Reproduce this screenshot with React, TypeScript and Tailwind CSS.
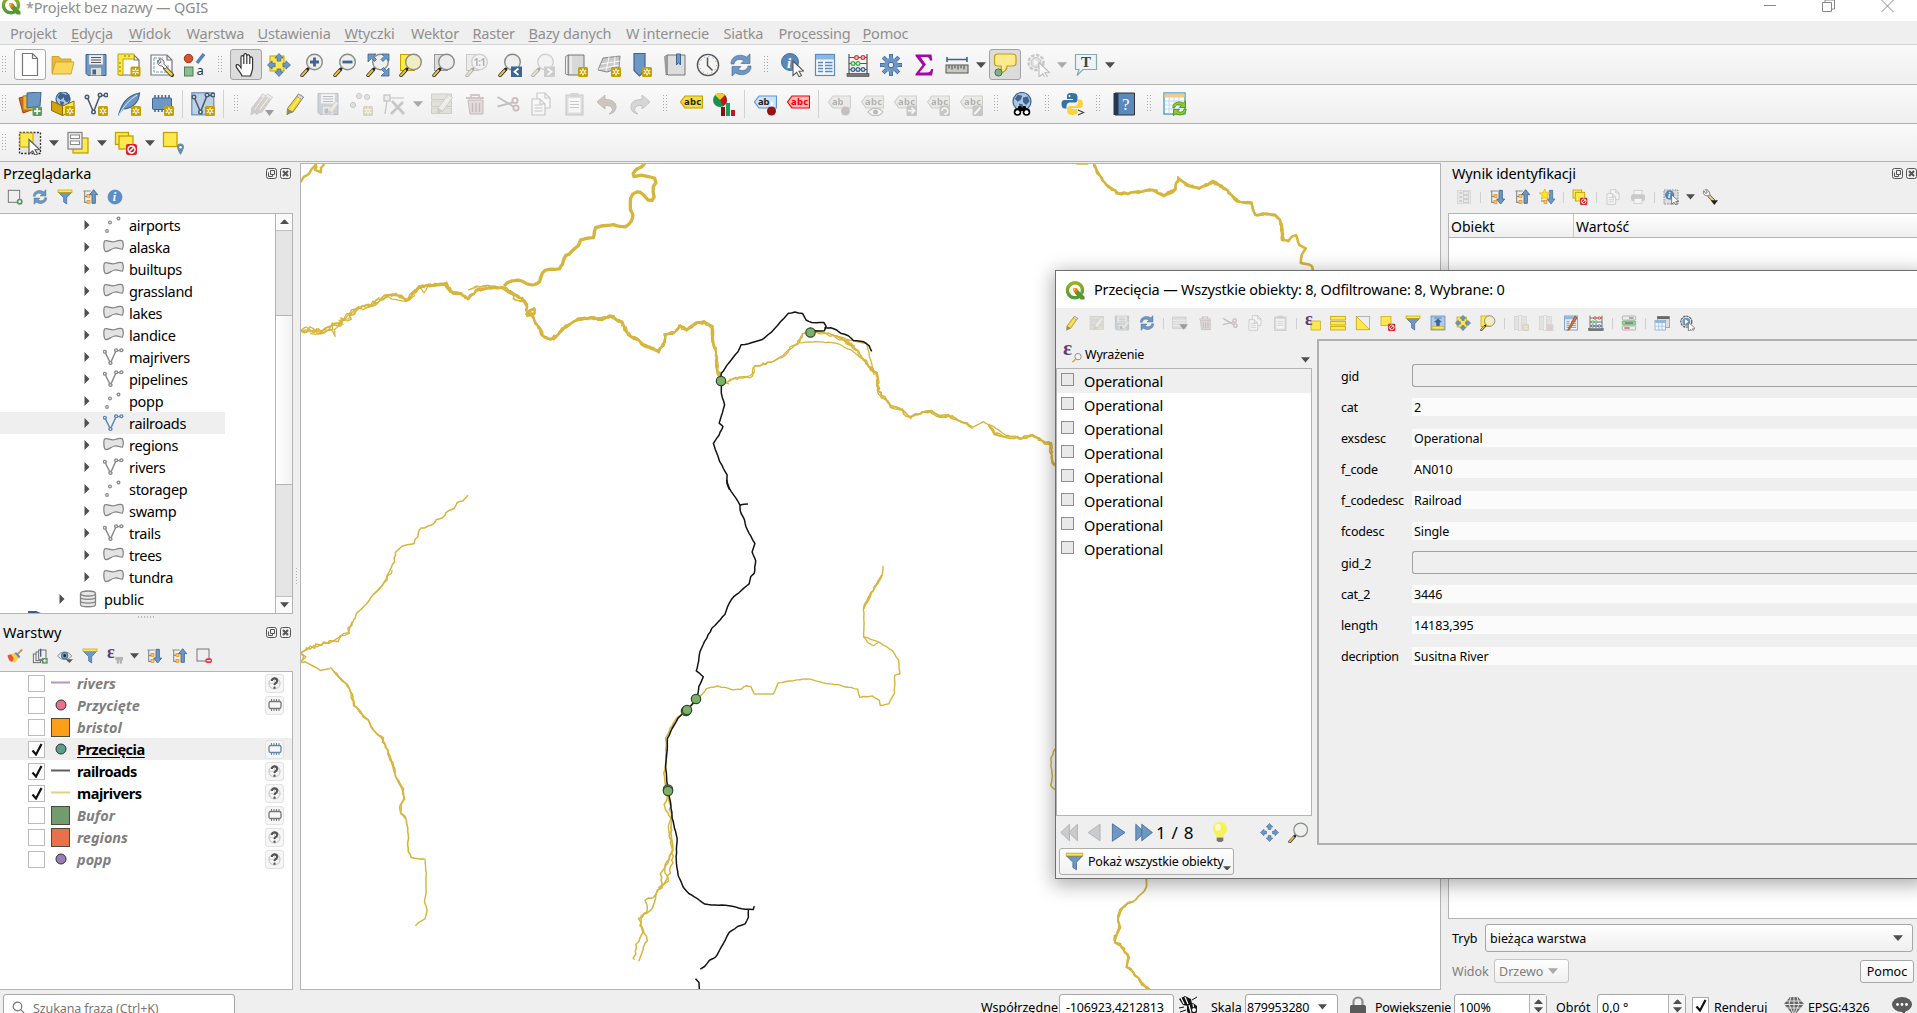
import React from "react";

type Pt = [number, number];
type Kids = { children?: React.ReactNode };

/* ---------- shared icon parts (24 x 24 grid) ---------- */

const B = "#6d97c4";
const BD = "#3f6490";
const Y = "#fce94f";
const YD = "#c4a000";

function Svg({ s = 24, dim = false, children }: Kids & { s?: number; dim?: boolean }) {
  return (
    <svg width={s} height={s} viewBox="0 0 24 24" fill="none" className={dim ? "shrink-0 opacity-35 grayscale-[60%]" : "shrink-0"}>
      {children}
    </svg>
  );
}

const Star = ({ x = 14, y = 14 }: { x?: number; y?: number }) => (
  <g transform={`translate(${x} ${y})`}>
    <rect width="10" height="10" rx="1.5" fill={YD} />
    <path d="M5 1.5v7M1.8 3.2l6.4 3.6M8.2 3.2l-6.4 3.6" stroke="#fff" strokeWidth="1.3" />
    <circle cx="5" cy="5" r="1.1" fill={YD} />
  </g>
);

const Glass = ({ fill = "#eef0ee" }: { fill?: string }) => (
  <g>
    <path d="M2 22.5l5.5-6" stroke="#333" strokeWidth="3.4" strokeLinecap="round" />
    <path d="M2 22.3l4.5-5" stroke="#f3c331" strokeWidth="2" strokeLinecap="round" />
    <path d="M7 16.7l2.2-2.3" stroke="#222" strokeWidth="2.2" />
    <circle cx="14.5" cy="9" r="7.8" fill={fill} stroke="#8a8c88" strokeWidth="1.4" />
  </g>
);

const Arrows = ({ c = B }: { c?: string }) => (
  <g fill={c} stroke={BD} strokeWidth="0.7">
    <path d="M12 0.5l4.2 4.6h-2.4v3h-3.6v-3H7.800z" />
    <path d="M12 23.500l4.200-4.600h-2.400v-3h-3.600v3H7.800z" />
    <path d="M0.500 12l4.600-4.200v2.400h3v3.600h-3v2.400z" />
    <path d="M23.500 12l-4.600-4.200v2.400h-3v3.600h3v2.400z" />
  </g>
);

const Pencil = ({ c = "#f0d83c" }: { c?: string }) => (
  <g>
    <path d="M6 21l-2 2 .5-6.500L15.500 2l5 3L10 20z" fill={c} stroke="#8a7a20" strokeWidth="0.9" />
    <path d="M15.500 2l5 3-1.700 2.500-5-3z" fill="#d8d8d8" stroke="#888" strokeWidth="0.7" />
    <path d="M4.500 16.500L4 23l6-3z" fill="#888a80" />
    <path d="M8 17.500l8.600-12" stroke="#fff7a8" strokeWidth="1" />
  </g>
);

const TagShape = ({ fill, stroke, color, text = "abc" }: { fill: string; stroke: string; color: string; text?: string }) => (
  <g>
    <path d="M6 4h17.500v12H6L1.500 10z" fill={fill} stroke={stroke} strokeWidth="1.2" />
    <text x="5" y="13" fontSize="9.500" fontWeight="700" fill={color} fontFamily="Noto Sans, sans-serif" textLength={text.length * 5.700}>
      {text}
    </text>
  </g>
);

const VShape = ({ c = "#4f6f90", w = 1.6 }: { c?: string; w?: number }) => (
  <g stroke={c} strokeWidth={w}>
    <path d="M3.500 6L9.500 20 16 3.500h5" />
    <circle cx="3" cy="5" r="1.700" fill="#fff" />
    <circle cx="9.500" cy="20" r="1.700" fill="#fff" />
    <circle cx="16" cy="3" r="1.700" fill="#fff" />
    <circle cx="22" cy="3" r="1.700" fill="#fff" />
  </g>
);

const Funnel = () => (
  <g>
    <path d="M2 5h20l-7.500 8v9.500l-4.500-3V13z" fill={B} stroke={BD} strokeWidth="1" />
    <rect x="1.500" y="1.500" width="21" height="3.500" fill={Y} stroke={YD} />
  </g>
);

const Cursor = ({ x = 11, y = 9 }: { x?: number; y?: number }) => (
  <path transform={`translate(${x} ${y})`} d="M1 0.500l10.500 10-4.500.300 2.500 4.200-2.500 1.200-2.300-4.400L1 15z" fill="#fff" stroke="#555" strokeWidth="1.100" />
);

const Epsilon = () => (
  <text x="0" y="14.500" fontSize="27" fontWeight="700" fill="#5e3f75" fontFamily="Liberation Serif, serif">ε</text>
);

const Treelines = () => (
  <g>
    <path d="M2 3h11M4 3v18M4 11h4M4 20h4" stroke="#8b8b8b" strokeWidth="1.700" />
    <rect x="7.500" y="8" width="4.500" height="4.500" fill="#f9c277" stroke="#e08a1a" />
    <rect x="7.500" y="17" width="4.500" height="4.500" fill="#f9c277" stroke="#e08a1a" />
  </g>
);

const Refresh = () => (
  <g fill={B} stroke={BD} strokeWidth="0.6">
    <path d="M2 11C1.500 4 10-.500 17.500 4L21 1v9.500h-9l3-3C10 5 5.500 7 5 11z" />
    <path d="M22 13c.500 7-8 11.500-15.500 7L3 23v-9.500h9l-3 3c5 2.500 9.500.500 10-3.500z" />
  </g>
);

const Page = ({ x = 4, y = 2, w = 14, h = 20 }: { x?: number; y?: number; w?: number; h?: number }) => (
  <path d={`M${x} ${y}h${w - 5}l5 5v${h - 5}h${-w}z M${x + w - 5} ${y}v5h5`} fill="#fff" stroke="#777" strokeWidth="1.2" />
);

const Disk = () => (
  <g>
    <path d="M2 1.500h20v21H4L2 20.500z" fill={B} stroke={BD} />
    <rect x="5" y="2" width="14" height="9.500" fill="#eee" stroke="#bbb" strokeWidth=".5" />
    <path d="M7 4.500h10M7 7h10M7 9.500h10" stroke="#555" strokeWidth="1" />
    <rect x="6.500" y="14.500" width="11" height="8" fill="#ddd" stroke="#888" strokeWidth=".6" />
    <rect x="8.500" y="16.500" width="3.500" height="5" fill={BD} />
  </g>
);

const Abacus = () => (
  <g>
    <path d="M3 1v20M21 1v20M3 4.500h18M3 10.500h18M3 16.500h18" stroke="#555" strokeWidth="1.200" />
    <rect x="1" y="20.500" width="22" height="3" fill="#777" stroke="#444" strokeWidth=".6" />
    <g fill="#f5c9c9" stroke="#d33" strokeWidth="1.200"><circle cx="10.500" cy="4.500" r="1.900" /><circle cx="17" cy="4.500" r="1.900" /></g>
    <g fill="#c9f0c9" stroke="#4a4" strokeWidth="1.200"><circle cx="7" cy="10.500" r="1.900" /><circle cx="12" cy="10.500" r="1.900" /></g>
    <g fill="#c9daf0" stroke={BD} strokeWidth="1.200"><circle cx="7" cy="16.500" r="1.900" /><circle cx="12" cy="16.500" r="1.900" /><circle cx="17" cy="16.500" r="1.900" /></g>
  </g>
);

const Trash = () => (
  <g>
    <path d="M3 6h18M8 6V3h8v3" stroke="#a66" strokeWidth="1.800" />
    <path d="M5 8h15v14H7z" fill="#d5a8a0" stroke="#8a4a44" />
    <path d="M9.500 11v9M13 11v9M16.500 11v9" stroke="#8a4a44" strokeWidth="1.300" />
  </g>
);

const Scissors = () => (
  <g stroke="#666" strokeWidth="1.900">
    <path d="M1.500 5l16 9.500M1.500 14.500l15-4" />
    <circle cx="20" cy="16" r="2.600" stroke="#b44" />
    <circle cx="19" cy="8.500" r="2.600" stroke="#b44" />
  </g>
);

const Copy = () => (
  <g>
    <Page x={8} y={1} w={13} h={15} />
    <Page x={3} y={7} w={13} h={16} />
    <path d="M5.500 13h8M5.500 16h8M5.500 19h8" stroke="#777" />
  </g>
);

const Paste = () => (
  <g>
    <rect x="4" y="3" width="17" height="20" fill="#b5b5a0" stroke="#777" />
    <rect x="6.500" y="6" width="12" height="14.500" fill="#fff" />
    <rect x="8.500" y="1" width="8" height="4" fill="#999" />
    <path d="M8 9.500h9M8 12.500h9M8 15.500h9" stroke="#777" />
  </g>
);

const Forbid = ({ x = 12, y = 13 }: { x?: number; y?: number }) => (
  <g transform={`translate(${x} ${y})`}>
    <rect width="11" height="11" rx="2" fill="#d8232a" />
    <circle cx="5.500" cy="5.500" r="3.500" stroke="#fff" strokeWidth="1.400" />
    <path d="M3.200 7.800l4.600-4.600" stroke="#fff" strokeWidth="1.400" />
  </g>
);

const TableGrid = () => (
  <g>
    <rect x="2.500" y="1.500" width="19" height="21" fill="#f3f8fd" stroke="#5d8bbd" strokeWidth="1.200" />
    <rect x="3" y="2" width="18" height="4.500" fill="#8db8e2" />
    <path d="M5 9.500h5M5 12.500h5M5 15.500h5M5 18.500h5M12 9.500h7.500M12 12.500h7.500M12 15.500h7.500M12 18.500h7.500" stroke="#5d8bbd" strokeWidth="1.300" />
  </g>
);

const Globe = ({ cx = 12, cy = 9.500, r = 8.500 }: { cx?: number; cy?: number; r?: number }) => (
  <g>
    <circle cx={cx} cy={cy} r={r} fill="#a9c6e6" stroke="#3d5f88" strokeWidth="1.200" />
    <path d={`M${cx - r * 0.800} ${cy - r * 0.300}l3-4 4.500 1-1.500 4-3 2zM${cx + 1} ${cy - 4}l5-1 1.500 5-3.500 3.500-3-3zM${cx - 3} ${cy + 2}l4 1-1 4-2.500-1z`} fill="#41648f" />
  </g>
);

const SmallBadge = ({ children }: Kids) => (
  <g>
    <rect x="13.500" y="13.500" width="10.500" height="10.500" rx="1.500" fill="#777" />
    {children}
  </g>
);

/* ---------- icon set ---------- */

const IC: Record<string, React.ReactNode> = {
  file: <Page x={4.500} y={0.500} w={15} h={22} />,
  open: (
    <g stroke="#c9a227" strokeWidth=".9">
      <path d="M1 20V3.500h7l2 2.500h10v4z" fill="#e9b93a" />
      <path d="M1 21l3.500-12H23l-3 12z" fill="#fbd65b" />
    </g>
  ),
  save: <Disk />,
  layout: (
    <g>
      <Page x={3} y={2} w={19} h={20} />
      <path d="M1 1h16v5H6v16H1z" fill={Y} stroke={YD} />
      <path d="M8 2v2M12 2v2M2 10h2M2 14h2M2 18h2" stroke="#8b7200" />
      <Star x={13.500} y={13.500} />
    </g>
  ),
  wrench: (
    <g>
      <Page x={1} y={2} w={21} h={20} />
      <path d="M4 5h9M4 5v14h14v-7" stroke={B} strokeDasharray="3 1" />
      <path d="M15 15l7 7" stroke="#333" strokeWidth="4" strokeLinecap="round" />
      <path d="M15 15l6.500 6.500" stroke="#f3d24d" strokeWidth="2.500" strokeLinecap="round" />
      <path d="M8 7a4 4 0 004 6l3 3 2-2-3-3a4 4 0 00-5-5l2 3-1.500 1.500z" fill="#eee" stroke="#666" strokeWidth=".9" />
    </g>
  ),
  style: (
    <g>
      <circle cx="5.500" cy="5.500" r="4.200" fill="#d9542b" stroke="#9c3412" />
      <path d="M14 10l7-9" stroke="#5984b5" strokeWidth="3.500" />
      <rect x="1.500" y="14" width="8.500" height="9" fill="#8dbb93" stroke="#4d7f55" />
      <text x="13.500" y="22" fontSize="13" fill="#333" fontFamily="Noto Sans, sans-serif">a</text>
    </g>
  ),
  hand: (
    <path
      d="M8 23C7 19.500 3 16 2.200 13.500 1.500 11.500 4 11 5.200 12.500L7 15V4.200c0-2.200 2.600-2.200 2.800 0V2.200c.2-2.200 2.900-2 3 0v1c.3-1.900 2.800-1.700 3 .3v1.500c.4-1.700 2.700-1.500 2.800.5V15c0 3-1.600 5-2 8zM9.800 4v7M12.800 3v8M15.800 4v7"
      fill="#fff" stroke="#333" strokeWidth="1.200"
    />
  ),
  panSel: (<g><rect x="3" y="3" width="14" height="15" fill={Y} stroke={YD} /><Arrows /></g>),
  zoomIn: (<g><Glass /><path d="M14.500 4.500v9M10 9h9" stroke={BD} strokeWidth="2.800" /></g>),
  zoomOut: (<g><Glass /><path d="M9.500 9h10" stroke={BD} strokeWidth="2.800" /></g>),
  zoomFull: (
    <g><Glass /><g fill={B} stroke={BD} strokeWidth=".8">
      <path d="M2 1h8L7.500 3.500l3 3-2 2-3-3L2 9zM23 1h-7l2 2.500-3 3 2 2 3-3L23 8zM23 23v-8l-2.500 2.500-3-3-2 2 3 3L15 23z" />
    </g></g>
  ),
  zoomSel: (<g><rect x="1.500" y="1.500" width="14" height="16" fill={Y} stroke={YD} /><Glass fill="#f1edc4" /></g>),
  zoomLayer: (<g><rect x="2.500" y="1.500" width="13" height="16" fill="#ddd" stroke="#999" /><Glass fill="#ececec" /></g>),
  zoomOne: (<g><rect x="1.500" y="1.500" width="12" height="16" fill="#ddd" stroke="#777" /><Glass /><text x="8.500" y="13" fontSize="10" fontWeight="700" fill="#333" fontFamily="Noto Sans, sans-serif" textLength="12.500">1:1</text></g>),
  zoomLast: (<g><Glass /><rect x="13" y="13.500" width="11" height="10.500" fill={BD} /><path d="M20.500 15.500l-4 3.300 4 3.200" stroke="#fff" strokeWidth="1.800" /></g>),
  zoomNext: (<g><Glass /><rect x="13" y="13.500" width="11" height="10.500" fill="#888" /><path d="M16.500 15.500l4 3.300-4 3.200" stroke="#fff" strokeWidth="1.800" /></g>),
  newMap: (<g><path d="M4 2h16v20H4z" fill="#d8d8d8" stroke="#777" /><path d="M1.500 3.500L4 2v20l-2.500-1z" fill="#f2f2f2" stroke="#777" strokeWidth=".8" /><path d="M7 3v18" stroke="#f2f2f2" strokeWidth="1.500" /><Star /></g>),
  map3d: (<g><path d="M1 17L6 5l17-2-1 12-12 4z" fill="#c9c9c9" stroke="#888" /><path d="M4 11l19-3M12 4l-3 14M18 3.500L17 16M1.500 16L22 12" stroke="#fff" strokeWidth=".9" /><Star /></g>),
  bookmark: (<g><path d="M4 0.500h11v17L9.500 23 4 17.500z" fill={B} stroke={BD} strokeWidth="1.200" /><Star x={12} /></g>),
  bookmarks: (<g><path d="M4 2h18v20H5l-1-1z" fill="#ddd" stroke="#777" /><path d="M1.500 3.500L4 2v20H3z" fill="#aaa" stroke="#777" strokeWidth=".6" /><path d="M13.500 1h4v11l-2-2.500-2 2.500z" fill={B} stroke={BD} /></g>),
  clock: (<g><circle cx="12" cy="12" r="10.600" fill="#f4f5f3" stroke="#555" strokeWidth="1.400" /><circle cx="12" cy="12" r="8.500" stroke="#6d97c4" strokeWidth="1" strokeDasharray="1 3.450" /><path d="M11.500 4.500v8l5 5" stroke="#555" strokeWidth="1.500" /></g>),
  refresh: <Refresh />,
  identify: (<g><circle cx="10" cy="9" r="8.500" fill="#5c87b8" stroke="#44709f" /><text x="7" y="15" fontSize="15" fontWeight="700" fontStyle="italic" fill="#fff" fontFamily="Liberation Serif, serif">i</text><Cursor x={12} y={7.500} /></g>),
  table: <TableGrid />,
  abacus: <Abacus />,
  gear: (<g><g stroke={BD} strokeWidth="4"><path d="M12 1v22M1 12h22M4.200 4.200l15.600 15.600M19.800 4.200L4.200 19.800" /></g><g stroke={B} strokeWidth="2.600"><path d="M12 1.500v21M1.500 12h21M4.500 4.500l15 15M19.500 4.500l-15 15" /></g><circle cx="12" cy="12" r="7" fill={B} /><circle cx="12" cy="12" r="2.800" fill="#e9f0f8" stroke={BD} /></g>),
  sigma: <path d="M3.500 1.500h16l.8 6H18c-.5-2.500-1.500-3.500-4-3.500H8.500l5.500 7.500-6.500 8H15c2.500 0 3.500-1 4.300-3.500h2L20 22.500H3.500v-1.500l7-9-7-9z" fill="#a20aa8" />,
  ruler: (<g><path d="M2 6.500h20M2 4v5M22 4v5" stroke="#3f6490" strokeWidth="1.600" /><rect x="1" y="12" width="22" height="8" fill="#c9c9c4" stroke="#555" /><path d="M4 12.500v3M7 12.500v4M10 12.500v3M13 12.500v4M16 12.500v3M19 12.500v4" stroke="#444" /></g>),
  tip: (<g><path d="M5 1h14.500c2.200 0 3.500 1.200 3.500 3v6c0 2-1.300 3-3.500 3H14c0 3-2 6-6.500 7 1-2 1.500-4 .5-7H5c-2.200 0-3.500-1-3.500-3V4C1.500 2.200 2.800 1 5 1z" fill="#fbeb8e" stroke={YD} strokeWidth="1.200" /><circle cx="5.500" cy="19.500" r="3.600" fill="#80b284" stroke="#43744a" /></g>),
  action: (<g><circle cx="10" cy="9.500" r="7.500" stroke="#777" strokeWidth="2.500" strokeDasharray="3.500 1.500" /><circle cx="10" cy="9.500" r="5" fill="#bbb" stroke="#666" /><path d="M8 6.500l5 3-5 3z" fill="#fff" /><Cursor x={12} y={9} /></g>),
  textNote: (<g><path d="M1.500 1.500h21v15H9L3 22.500 5 16.500H1.500z" fill="#eef4f6" stroke="#8aa" strokeWidth="1.200" /><text x="7" y="14" fontSize="15" fontWeight="700" fill="#444" fontFamily="Liberation Serif, serif">T</text></g>),

  dataSource: (<g><path d="M1 6l11-3 4 14-11 4z" fill="#d9622d" stroke="#a33f12" /><path d="M5 4l12-1 1 15H5z" fill="#eab835" stroke="#a98312" /><path d="M9 1l14-1-1 14-13 2z" fill={B} stroke={BD} /><rect x="14.500" y="14.500" width="9.500" height="9.500" rx="1.500" fill="#5d9a63" /><path d="M19.200 16v6.500M16 19.200h6.500" stroke="#fff" strokeWidth="1.700" /></g>),
  geopackage: (<g><Globe cx={12} cy={7} r={7} /><path d="M0.500 9l11 5v9.500l-11-5z" fill="#d6a400" stroke="#8b6c00" /><path d="M11.500 14L23 9v9.500l-11.500 5z" fill={Y} stroke="#8b6c00" /><Star /></g>),
  shapefile: (<g><VShape c="#4c5d6d" /><Star /></g>),
  spatialite: (<g><path d="M1.500 23.500C4 14 8 4 22.500 1 22 9 17 16 7 17" fill={B} stroke={BD} strokeWidth="1.200" /><path d="M1.500 23.500C6 15 12 8 20 3" stroke="#dfe9f5" strokeWidth="1" /><Star /></g>),
  memory: (<g><path d="M5 3v17M8.500 3v17M12 3v17M15.500 3v17M19 3v17" stroke={BD} strokeWidth="1.500" /><rect x="2.500" y="6" width="19" height="11.500" rx="1" fill={B} stroke={BD} /><Star /></g>),
  virtual: (<g><rect x=".8" y=".8" width="22" height="22" fill="#bdd2ea" stroke="#6b8db3" strokeWidth="1.200" /><VShape c="#4c5d6d" /><Star /></g>),
  pencils: (<g><g transform="translate(-3 0)"><Pencil c="#a9897a" /></g><g transform="translate(2 0)"><Pencil c="#a9897a" /></g><path d="M15 18h9l-4.500 6z" fill="#000" /></g>),
  pencil: <Pencil />,
  saveEdits: (<g><Disk /><g transform="translate(10 8) scale(.62)"><Pencil /></g></g>),
  points: (<g><g fill="#bbb" stroke="#777"><circle cx="4" cy="13" r="2.600" /><circle cx="10" cy="4" r="2.600" /><circle cx="18" cy="5" r="2.600" /></g><Star /></g>),
  vertex: (<g><rect x="2" y="3" width="6" height="6" fill="#ddd" stroke="#666" strokeWidth="1.300" /><path d="M8 6h14M5 9L3 22" stroke="#666" strokeWidth="1.200" /><path d="M10 9l12 13M21 10L9 22" stroke="#777" strokeWidth="2.800" /></g>),
  multiEdit: (<g><rect x="1.500" y="2" width="20" height="5.500" fill="#c9c37e" stroke="#887" /><rect x="1.500" y="9" width="20" height="5.500" fill="#c9c37e" stroke="#887" /><rect x="1.500" y="16" width="20" height="5.500" fill="#c9c37e" stroke="#887" /><g transform="translate(4 1) scale(.9)"><Pencil c="#ddd" /></g></g>),
  trash: <Trash />,
  cut: <Scissors />,
  copy: <Copy />,
  paste: <Paste />,
  undo: <path d="M2 10l8-7v4.500c8 0 11 3 11 7.500 0 4-3 6.500-7 7 3-2 4-4 3-6-1-2-3-2.800-7-2.500V17z" fill="#9a6a4a" stroke="#6d4e36" />,
  redo: <path d="M22 10l-8-7v4.500C6 7.500 3 10.500 3 15c0 4 3 6.500 7 7-3-2-4-4-3-6 1-2 3-2.800 7-2.500V17z" fill="#9aa09a" stroke="#667" />,
  abcYellow: <TagShape fill="#f5dd3a" stroke={YD} color="#222" />,
  abcRed: <TagShape fill="#ffb9b9" stroke="#f00000" color="#f00000" />,
  abcPin: (<g><TagShape fill="#cfe3fb" stroke="#5b93d8" color="#222" text="ab" /><path d="M18 18l1-8" stroke="#fff" strokeWidth="2" /><circle cx="18.500" cy="19" r="4.500" fill="#96131a" /></g>),
  diagram: (<g><circle cx="8" cy="8" r="7" fill="#16924f" /><path d="M8 8V1a7 7 0 017 7z" fill="#c4151c" /><path d="M8 8L3 3a7 7 0 0110 0z" fill="#f4cf1f" /><path d="M8 8h7a7 7 0 01-4 6z" fill="#c4151c" /><rect x="9" y="15" width="4" height="9" fill="#8c0f14" /><rect x="14" y="11" width="4" height="13" fill="#14a055" /><rect x="19" y="18" width="4" height="6" fill="#c4151c" /></g>),
  gPin: (<g><TagShape fill="#dcd8b8" stroke="#888" color="#333" text="ab" /><circle cx="18.500" cy="19" r="4.500" fill="#8b5e5e" /></g>),
  gEye: (<g><TagShape fill="#dcd8b8" stroke="#888" color="#333" /><path d="M8 20c4-5 11-5 15 0-4 5-11 5-15 0z" fill="#fff" stroke="#555" strokeWidth="1.200" /><circle cx="15.500" cy="20" r="2.500" fill="#555" /></g>),
  gMove: (<g><TagShape fill="#dcd8b8" stroke="#888" color="#333" /><SmallBadge><path d="M15 18.700h6M18.500 15.800l3.200 2.900-3.200 3" stroke="#fff" strokeWidth="1.600" /></SmallBadge></g>),
  gRotate: (<g><TagShape fill="#dcd8b8" stroke="#888" color="#333" /><SmallBadge><path d="M15.800 19a3 3 0 116 0c0 2-1.500 3.200-3.500 3.200" stroke="#fff" strokeWidth="1.500" /></SmallBadge></g>),
  gEdit: (<g><TagShape fill="#dcd8b8" stroke="#888" color="#333" /><SmallBadge><path d="M15.500 22l6-6.500" stroke="#fff" strokeWidth="2" /></SmallBadge></g>),
  metasearch: (<g><Globe r={9} /><path d="M6 22l2.500-8h2.500l1 2 1-2h2.500L18 22h-4v-3h-4v3z" fill="#000" /><circle cx="7.500" cy="20" r="3.800" fill="#000" /><circle cx="16.500" cy="20" r="3.800" fill="#000" /><circle cx="7.500" cy="20.200" r="2" fill="#fff" /><circle cx="16.500" cy="20.200" r="2" fill="#fff" /></g>),
  python: (
    <g>
      <path d="M10.500 1C6.500 1 6 2.500 6 4.500V7h6v1H3.500C1.500 8 .5 9.500.5 12s1 4.500 3 4.500H5.500V14c0-2 1.500-3.500 3.500-3.500h5c1.500 0 2.500-1 2.500-2.500V4.500C16.500 2 14.500 1 10.500 1z" fill="#3672a4" />
      <path d="M11 23c4 0 5.500-1.500 5.500-3.500V17h-6v-1h8.500c2 0 3-1.500 3-4s-1-4.500-3-4.500H17v3c0 2-1.500 3.500-3.500 3.500H9c-1.500 0-2.800 1-2.800 2.500v3C6.200 22 8 23 11 23z" fill="#fcd33f" />
      <circle cx="8.500" cy="4" r="1" fill="#fff" />
      <path d="M17 18l5.500 2.500L17 23" stroke="#444" strokeWidth="1.200" />
    </g>
  ),
  help: (<g><path d="M3 1h19.500v22H3z" fill="#5b88bd" stroke="#333" /><path d="M1.500 1h5v22h-5z" fill="#26384f" /><text x="10" y="17.500" fontSize="17" fill="#fff" fontFamily="Liberation Serif, serif">?</text></g>),
  reload: (<g><rect x="1" y="1" width="21" height="21" fill="#fff" stroke="#4a9dd0" strokeWidth="1.400" /><rect x="1.500" y="1.500" width="20" height="4" fill="#fbc977" /><path d="M6 2v19.500M11 2v19.500M16 2v19.500M2 9h19M2 13h19M2 17h19" stroke="#b9d9ee" /><g transform="translate(8.500 8.500) scale(.66)"><path d="M2 11C1.500 4 10-.500 17.500 4L21 1v9.500h-9l3-3C10 5 5.500 7 5 11zM22 13c.500 7-8 11.500-15.500 7L3 23v-9.500h9l-3 3c5 2.500 9.500.500 10-3.500z" fill="#8ccf2b" stroke="#4f8f0c" strokeWidth="1.400" /></g></g>),

  select: (<g><rect x="1.500" y="1.500" width="21" height="21" fill="#e4e4e4" stroke="#333" strokeWidth="1.300" strokeDasharray="2 1.500" /><rect x="2" y="2" width="13" height="14" fill={Y} stroke={YD} /><Cursor x={10} y={8} /></g>),
  selectForm: (<g><rect x="7" y="7" width="15" height="15" fill={Y} stroke={YD} strokeWidth="1.300" /><rect x="2" y="1.500" width="14" height="16.500" fill="#eee" stroke="#888" strokeWidth="1.300" /><rect x="4.500" y="4" width="9" height="3.500" fill="#fff" stroke="#888" /><rect x="4.500" y="10" width="9" height="3.500" fill="#fff" stroke="#888" /></g>),
  deselect: (<g><rect x="1.500" y="1.500" width="13" height="12" fill={Y} stroke={YD} strokeWidth="1.300" /><rect x="5" y="5" width="14" height="13" fill={Y} stroke={YD} strokeWidth="1.300" /><Forbid /></g>),
  selectLoc: (<g><rect x="1.500" y="1.500" width="13.500" height="14" fill={Y} stroke={YD} strokeWidth="1.300" /><path d="M18.500 12.500a3.500 3.500 0 013.500 3.500c0 2.500-3.500 8-3.500 8s-3.500-5.500-3.500-8a3.500 3.500 0 013.500-3.500z" fill="#6b8ca5" /><circle cx="18.500" cy="16.300" r="1.200" fill="#fff" /></g>),

  addLayer: (<g><rect x="2" y="2" width="17" height="18" stroke="#777" strokeWidth="1.500" /><circle cx="19" cy="19" r="4.500" fill="#5a9460" /><circle cx="19" cy="19" r="2" fill="#e5f2e6" /></g>),
  filter: <Funnel />,
  collapse: (<g><Treelines /><path d="M17.500 1l6 7.500h-3.500v13h-5v-13h-3.500z" fill={B} stroke={BD} strokeWidth="1.300" /></g>),
  expand: (<g><Treelines /><path d="M17.500 22.500l6-7.500h-3.500V2h-5v13h-3.500z" fill={B} stroke={BD} strokeWidth="1.300" /></g>),
  expandNew: (<g><path d="M3 18h5" stroke="#8b8b8b" strokeWidth="1.700" /><rect x="7.500" y="17" width="4.500" height="4.500" fill="#f9c277" stroke="#e08a1a" /><path d="M18 22.500l6-7.500h-3.500V2h-5v13h-3.500z" fill={B} stroke={BD} /><path d="M8.500 0l2.200 5.500 5.800.500-4.500 3.800 1.500 5.700L8.500 12.400 3.500 15.500 5 9.800.500 6l5.800-.500z" fill="#ffe71a" stroke="#e3a800" /></g>),
  info: (<g><circle cx="12" cy="12" r="10.500" fill="#5c8fca" stroke="#4577b3" /><text x="8.800" y="18.500" fontSize="18" fontWeight="700" fontStyle="italic" fill="#fff" fontFamily="Liberation Serif, serif">i</text></g>),
  brush: (<g><path d="M14 11l8-8" stroke="#d09a45" strokeWidth="3" strokeLinecap="round" /><path d="M1 11l12-4 6 6-7 9-7-2z" fill="#f4cf45" /><path d="M1 11l5-1.500 4 5.500-2 5.500-3-.5c-2-2-4-5-4-9z" fill="#e4563c" /><path d="M11 7.500l3-1 6 6-2 3z" fill="#5c8fca" /></g>),
  group: (<g stroke="#666" strokeWidth="1.400"><rect x="2" y="9" width="11" height="13" fill="#eee" /><rect x="6" y="6" width="11" height="13" fill="#eee" /><rect x="10" y="3" width="11" height="14" fill="#eee" /><path d="M13 1v12" stroke={BD} strokeWidth="2" /><rect x="15" y="15" width="8.500" height="8.500" fill="#5a9460" stroke="none" /><path d="M19.200 16.500v5.500M16.500 19.200H22" stroke="#fff" strokeWidth="1.500" /></g>),
  eye: (<g><path d="M1 12C6 4 17 4 22 12c-5 7-16 7-21 0z" fill="#e6eaee" stroke="#888" strokeWidth="1.400" /><circle cx="11.500" cy="11.500" r="5" fill="#6d97c4" stroke="#456" /><circle cx="11.500" cy="11.500" r="2" fill="#222" /><path d="M13 17h11l-5.500 5.500z" fill="#555" /></g>),
  epsilon: (<g><Epsilon /><path d="M13 14h11v3.500h-2V23h-2.500v-5h-2v5H15v-5.500h-2z" fill="#b5b5b5" stroke="#999" strokeWidth=".6" /></g>),
  epsilonFind: (<g><Epsilon /><path d="M12 23l4-4" stroke="#d8b23a" strokeWidth="2.200" /><circle cx="19" cy="16" r="4" fill="#f6f6f6" stroke="#888" strokeWidth="1.200" /></g>),
  removeLayer: (<g><rect x="1.500" y="1.500" width="18" height="18" stroke="#777" strokeWidth="1.500" /><rect x="14" y="15.500" width="10" height="7" rx="3" fill="#e8303a" /><path d="M16 19h6" stroke="#fff" strokeWidth="1.800" /></g>),

  form: (<g><rect x="2" y="2" width="20" height="20" fill="#ddd" stroke="#999" /><path d="M5 6h4M5 12h4M5 18h4" stroke="#777" strokeWidth="2" /><rect x="11" y="4" width="8" height="4" stroke="#777" /><rect x="11" y="10" width="8" height="4" stroke="#777" /><rect x="11" y="16" width="8" height="4" stroke="#777" /></g>),
  printer: (<g><rect x="6" y="2" width="12" height="8" fill="#fff" stroke="#777" /><rect x="1.500" y="8" width="21" height="10" rx="3" fill="#888" /><rect x="6" y="14" width="12" height="8" fill="#fff" stroke="#777" /></g>),
  identSel: (<g><rect x="1.500" y="1.500" width="21" height="21" fill="#ddd" stroke="#666" strokeDasharray="2.500 1.500" /><circle cx="10" cy="9" r="7" fill="#5c87b8" /><text x="7.500" y="14" fontSize="13" fontWeight="700" fontStyle="italic" fill="#fff" fontFamily="Liberation Serif, serif">i</text><Cursor x={12} y={8} /></g>),
  spanner: (<g><path d="M10 10l8 8" stroke="#555" strokeWidth="5" /><path d="M10 10l8 8" stroke="#e8d27a" strokeWidth="3" /><path d="M2.500 2.500C1 6 3 10 7 10l2.500.5L12 8l-1-3C10 2 7.500.500 5 1l3 3.500L6 7z" fill="#f7f7f7" stroke="#666" strokeWidth="1.300" /><path d="M13 17h11l-5.500 7z" fill="#222" /></g>),

  selExpr: (<g><rect x="9" y="9" width="14" height="13.500" fill={Y} stroke={YD} /><Epsilon /></g>),
  selAll: (<g fill={Y} stroke={YD} strokeWidth="1.200"><rect x="1" y="2" width="22" height="5.500" /><rect x="1" y="9.500" width="22" height="5.500" /><rect x="1" y="17" width="22" height="5.500" /></g>),
  invert: (<g><rect x="2" y="2" width="20" height="20" fill="#eee" stroke="#999" /><path d="M2 2v20h20z" fill={Y} stroke={YD} /></g>),
  desel: (<g><rect x="1.500" y="2" width="15" height="14" fill={Y} stroke={YD} /><Forbid /></g>),
  moveTop: (<g><rect x="1.500" y="1.500" width="21" height="21" fill="#a9cbee" stroke={BD} strokeWidth=".8" /><rect x="3" y="17" width="18" height="4" fill={Y} stroke={YD} strokeWidth=".7" /><path d="M6 4.500h12M12 5.500l5 5h-3V16h-4v-5.500H7z" fill={BD} stroke={BD} /></g>),
  newField: (<g><rect x="2" y="2" width="18" height="20" fill="#ccc" stroke="#999" /><rect x="8" y="1" width="5" height="22" fill="#eaeab8" stroke="#999" /><Star /></g>),
  delField: (<g><rect x="2" y="2" width="18" height="20" fill="#ccc" stroke="#999" /><rect x="8" y="1" width="5" height="22" fill="#eee" stroke="#999" /><rect x="13" y="14" width="10" height="10" fill="#d88" /></g>),
  tableEdit: (<g><TableGrid /><path d="M8 20l-1 3 3-1.500L21 4l-3-2.500z" fill="#e0763a" stroke="#8d3f12" /></g>),
  conditional: (<g><rect x="2" y="1.500" width="20" height="6" rx="1" fill="#eee" stroke="#999" /><rect x="2" y="9" width="20" height="6" rx="1" fill="#9ad29b" stroke="#6a6" /><rect x="2" y="16.500" width="20" height="6" rx="1" fill="#eee" stroke="#999" /><path d="M12 4.500h7M6 12h12" stroke="#444" strokeWidth="1.200" /><path d="M5 19.500h8" stroke="#d22" strokeWidth="1.600" /></g>),
  dock: (<g><rect x="5" y="2" width="18" height="17" fill="#ddd" stroke="#888" /><rect x="5" y="2" width="18" height="4" fill="#666" /><rect x="1.500" y="8" width="16" height="14.500" fill="#eef5fc" stroke="#7a9cc0" /><rect x="2" y="8.500" width="15" height="3.500" fill="#8db8e2" /><path d="M7 12v10M12 12v10M2 17h15" stroke="#9bbbd8" /></g>),
  actions: (<g><circle cx="11" cy="10" r="8.200" stroke="#666" strokeWidth="2" strokeDasharray="3.500 1.200" /><circle cx="11" cy="10" r="6" fill="#6d97c4" /><path d="M9 6.500l5.500 3.500L9 13.500z" fill="#fff" /><Cursor x={13} y={10} /></g>),
  tableDrop: (<g><rect x="1" y="3" width="20" height="17" fill="#bbb" stroke="#777" /><path d="M1 8h20M1 12h20M1 16h20" stroke="#fff" /><path d="M11 14h13l-6.500 8z" fill="#000" /></g>),

  first: (<g fill="#c9cccf" stroke="#aaa"><path d="M12 1.500v21L1 12z" /><path d="M22 1.500v21L11 12z" /></g>),
  prev: <path d="M19 1.500v21L4 12z" fill="#c9cccf" stroke="#aaa" />,
  next: <path d="M3 1v22L19 12z" fill={B} stroke={BD} />,
  last: (<g fill={B} stroke={BD}><path d="M1 1.500v21L12 12z" /><path d="M8.500 1.500v21L22 12z" /></g>),
  bulb: (<g><path d="M12 0C6.500 0 3.500 3.500 3.500 8c0 4 3.500 6 4.500 10h8c1-4 4.500-6 4.500-10 0-4.500-3-8-8.500-8z" fill="#f6f25a" /><ellipse cx="9.500" cy="6.500" rx="3.500" ry="4" fill="#fdfcc8" /><path d="M8 18.500h8v4l-2 1.500h-4l-2-1.500z" fill="#777" /></g>),
  move: <Arrows />,
  zoom: <Glass />,
};

function Icon({ n, s = 24, dim = false }: { n: string; s?: number; dim?: boolean }) {
  return <Svg s={s} dim={dim}>{IC[n]}</Svg>;
}

const Tri = ({ dim = false, s = 10 }: { dim?: boolean; s?: number }) => (
  <svg width={s} height={s * 0.6} viewBox="0 0 10 6" className="shrink-0">
    <path d="M0 0.300h10L5 6z" fill={dim ? "#a9a9a9" : "#4e4e4e"} />
  </svg>
);

/* ---------- toolbars ---------- */

// "|" grip, "/" separator, "v" drop-down, "*" pressed, "+" hovered, "-" disabled prefix
function Tool({ t }: { t: string }) {
  if (t === "|")
    return (
      <span className="flex w-[18px] shrink-0 justify-center gap-[2px]">
        <i className="h-[18px] w-px bg-[repeating-linear-gradient(#a8a8a8_0_1px,transparent_1px_3px)]" />
        <i className="h-[18px] w-px bg-[repeating-linear-gradient(#a8a8a8_0_1px,transparent_1px_3px)]" />
      </span>
    );
  if (t === "/") return <span className="flex w-2 shrink-0 justify-center"><i className="h-7 w-px bg-[#d2d2d2]" /></span>;
  if (t === "v" || t === "-v") return <span className="flex w-[15px] shrink-0 justify-center"><Tri dim={t === "-v"} /></span>;
  const p = t[0];
  const name = "*+-".includes(p) ? t.slice(1) : t;
  const box = p === "*" ? "border border-[#a3a3a3] bg-[#dcdcdc] rounded-[3px]" : p === "+" ? "border border-[#a9a9a9] bg-[#fdfdfd] rounded-[3px]" : "";
  return (
    <span className="flex w-[33px] shrink-0 justify-center">
      <span className={`flex h-[31px] w-8 items-center justify-center ${box}`}>
        <Icon n={name} dim={p === "-"} />
      </span>
    </span>
  );
}

function Bar({ items, h }: { items: string; h: string }) {
  return (
    <div className={`flex ${h} shrink-0 items-center border-b border-[#b2b2b2] bg-linear-to-b from-[#fafafa] to-[#efefef]`}>
      <div className="-ml-[5px] flex items-center">
        {items.split(" ").map((t, i) => <Tool key={i} t={t} />)}
      </div>
    </div>
  );
}

function MiniBar({ items, s = 16 }: { items: string; s?: number }) {
  return (
    <div className="flex items-center">
      {items.split(" ").map((t, i) =>
        t === "/" ? (
          <span key={i} className="flex w-2 justify-center"><i className="h-[11px] w-px bg-[#cfcfcf]" /></span>
        ) : t === "v" ? (
          <span key={i} className="flex w-[14px] justify-center"><Tri s={9} /></span>
        ) : (
          <span key={i} className="flex w-[25px] justify-center"><Icon n={t.replace("-", "")} s={s} dim={t[0] === "-"} /></span>
        )
      )}
    </div>
  );
}

const QLogo = ({ s }: { s: number }) => (
  <svg width={s} height={s} viewBox="0 0 24 24" fill="none" className="shrink-0">
    <defs><linearGradient id="qg" x1="0" y1="0" x2="0" y2="1"><stop offset="0" stopColor="#93b023" /><stop offset="1" stopColor="#4f9a3a" /></linearGradient></defs>
    <path d="M19 19.500A10 10 0 1122 12a10 10 0 01-1.300 5" stroke="url(#qg)" strokeWidth="4.500" transform="translate(1.200 1.200) scale(.9)" />
    <path d="M11.500 12.500l4-.5 8 8v3.500h-4.500l-7-7z" fill="#589632" />
    <path d="M9.500 9.500l5 .5 1.500 2-3.500 4-2-1.500z" fill="#ee7913" />
    <path d="M9.500 9.500l3.500 1-2 3z" fill="#f6c21c" />
  </svg>
);

const MENU: [string, string, string, string][] = [
  ["Pro", "j", "ekt", "w-[61px]"], ["", "E", "dycja", "w-[58px]"], ["", "W", "idok", "w-[57.5px]"], ["W", "a", "rstwa", "w-[71px]"],
  ["", "U", "stawienia", "w-[87px]"], ["", "W", "tyczki", "w-[66.5px]"], ["Wekt", "o", "r", "w-[61.5px]"], ["", "R", "aster", "w-[56px]"],
  ["", "B", "azy danych", "w-[97.5px]"], ["W ", "i", "nternecie", "w-[97.5px]"], ["Siatka", "", "", "w-[55px]"], ["Pro", "c", "essing", "w-[84px]"], ["", "P", "omoc", "w-[60px]"],
];

/* ---------- docks ---------- */

const DockButtons = () => (
  <span className="flex gap-[3px]">
    {[0, 1].map((k) => (
      <svg key={k} width="11" height="11" viewBox="0 0 11 11" fill="none" stroke="#555" className="shrink-0">
        <rect x=".5" y=".5" width="10" height="10" rx="2" />
        {k === 0 ? <path d="M4.500 2.500h4v4h-4zM2.500 4.500v4h4v-2" /> : <path d="M3 3l5 5M8 3L3 8" strokeWidth="2" />}
      </svg>
    ))}
  </span>
);

const Expander = () => (
  <svg width="6" height="10" viewBox="0 0 6 10" className="shrink-0"><path d="M.5 0L5.500 5l-5 5z" fill="#505050" /></svg>
);

function GeomIcon({ k, active }: { k: string; active?: boolean }) {
  if (k === "v") return <svg width="21" height="18" viewBox="1 0 24 24" preserveAspectRatio="none" fill="none"><VShape c={active ? "#5b87b0" : "#8a8a8a"} w={1.700} /></svg>;
  if (k === "p")
    return (
      <svg width="21" height="18" viewBox="0 0 21 18" fill="#fff" stroke="#8a8a8a" strokeWidth="1.200">
        <circle cx="4" cy="15" r="1.400" /><circle cx="7" cy="6.500" r="1.400" /><circle cx="15.500" cy="2.500" r="1.400" />
      </svg>
    );
  return (
    <svg width="21" height="18" viewBox="0 0 21 18" fill="#e3e3e3" stroke="#828282" strokeWidth="1.200">
      <path d="M1.500 3C4 1.500 8 5 12 3.500 15 2.500 18.500 2 19.500 3c.8 2 .8 6 0 8-1 1-4-1.500-7.500-1-4 .5-7 4.500-9.500 3.500C.5 12 .5 5 1.500 3z" />
    </svg>
  );
}

const TREE: [string, string][] = [
  ["airports", "p"], ["alaska", "g"], ["builtups", "g"], ["grassland", "g"], ["lakes", "g"], ["landice", "g"], ["majrivers", "v"], ["pipelines", "v"],
  ["popp", "p"], ["railroads", "v"], ["regions", "g"], ["rivers", "v"], ["storagep", "p"], ["swamp", "g"], ["trails", "v"], ["trees", "g"], ["tundra", "g"],
];

function Browser() {
  return (
    <section className="flex h-[452px] flex-col">
      <div className="flex h-[22px] items-end justify-between pr-[2px] pl-[3px]">
        <h2 className="text-[14.500px] leading-[21px] tracking-[-0.1px]">Przeglądarka</h2>
        <span className="pb-[5px]"><DockButtons /></span>
      </div>
      <div className="flex h-[29px] items-center pb-[3px] pl-[2px]"><MiniBar items="addLayer refresh filter collapse info" /></div>
      <div className="flex h-[401px] border border-l-0 border-[#b4b4b4] bg-white">
        <ul className="min-w-0 flex-1 overflow-hidden">
          {TREE.map(([name, k]) => (
            <li key={name} className={`flex h-[22px] items-center pl-[84px] ${name === "railroads" ? "w-[225px] bg-[#efefef]" : ""}`}>
              <Expander />
              <span className="ml-[13px] flex w-[26px]"><GeomIcon k={k} active={name === "railroads"} /></span>
              <span className="pt-px text-[14.500px] leading-[21px] tracking-[-0.3px]">{name}</span>
            </li>
          ))}
          <li className="flex h-[22px] items-center pl-[59px]">
            <Expander />
            <svg width="18" height="18" viewBox="0 0 18 18" fill="#e8e8e8" stroke="#848484" strokeWidth="1.300" className="ml-[14px]">
              <path d="M1.500 3.500v11c0 3 15 3 15 0v-11" /><path d="M1.500 7.300c0 2.700 15 2.700 15 0M1.500 11c0 2.700 15 2.700 15 0" /><ellipse cx="9" cy="3.500" rx="7.500" ry="2.500" />
            </svg>
            <span className="ml-[7px] pt-px text-[14.500px] leading-[21px] tracking-[-0.2px]">public</span>
          </li>
          <li className="pt-[1px] pl-[28px]"><svg width="14" height="2"><path d="M0 0h8l5 2H0z" fill="#3f5f86" /></svg></li>
        </ul>
        <div className="flex w-[17px] flex-col border-l border-[#b4b4b4] bg-[#e5e5e5]">
          <span className="flex h-[17px] items-center justify-center border-b border-[#c0c0c0] bg-[#fafafa]"><span className="rotate-180"><Tri s={9} /></span></span>
          <span className="h-[84px]" />
          <span className="h-[170px] border-y border-[#b4b4b4] bg-linear-to-r from-white to-[#f2f2f2]" />
          <span className="flex-1" />
          <span className="flex h-[17px] items-center justify-center border-t border-[#c0c0c0] bg-[#fafafa]"><Tri s={9} /></span>
        </div>
      </div>
    </section>
  );
}

type Layer = { n: string; on?: boolean; cur?: boolean; shape: "line" | "dot" | "box"; c: string; side?: "q" | "m" };
const LAYERS: Layer[] = [
  { n: "rivers", shape: "line", c: "#b794c0", side: "q" },
  { n: "Przycięte", shape: "dot", c: "#e8718d", side: "m" },
  { n: "bristol", shape: "box", c: "#ff9e17" },
  { n: "Przecięcia", on: true, cur: true, shape: "dot", c: "#5b9e8b", side: "m" },
  { n: "railroads", on: true, shape: "line", c: "#5e5e5e", side: "q" },
  { n: "majrivers", on: true, shape: "line", c: "#e3d182", side: "q" },
  { n: "Bufor", shape: "box", c: "#729b6f", side: "m" },
  { n: "regions", shape: "box", c: "#e8714a", side: "q" },
  { n: "popp", shape: "dot", c: "#987db7", side: "q" },
];

const Check = () => (
  <svg width="12" height="13" viewBox="0 0 12 13" fill="none" stroke="#111" strokeWidth="2.200"><path d="M1.500 7.500L5 11.500 10.500 1" /></svg>
);

function SideIcon({ k, cur }: { k: "q" | "m"; cur?: boolean }) {
  return (
    <span className="flex size-[19px] items-center justify-center rounded-[3px] border border-[#e2e2e2] bg-[#f6f6f6]">
      {k === "q" ? (
        <svg width="15" height="15" viewBox="0 0 15 15" fill="none">
          <circle cx="7.500" cy="7.500" r="5.500" stroke="#ccc" strokeWidth="1.200" /><path d="M1 7.500h13M7.500 1v13" stroke="#d5d5d5" />
          <path d="M4.800 5c0-3.500 5.400-3.500 5.400 0 0 1.900-2.700 1.900-2.700 4M7.500 10.800v2" stroke="#555" strokeWidth="2.100" />
        </svg>
      ) : (
        <svg width="14" height="12" viewBox="0 0 14 12" fill="none" stroke={cur ? "#6486a6" : "#777"}>
          <path d="M3.500 0v12M6 0v12M8.500 0v12M11 0v12" /><rect x="1" y="2.500" width="12" height="7" rx="1.500" fill="#f6f6f6" strokeWidth="1.300" />
        </svg>
      )}
    </span>
  );
}

function Layers() {
  return (
    <section className="flex flex-col">
      <div className="mx-auto mt-[2px] h-[2px] w-[17px] bg-[repeating-linear-gradient(90deg,#b5b5b5_0_1px,transparent_1px_3px)]" />
      <div className="flex h-[25px] items-end justify-between pr-[2px] pl-[3px]">
        <h2 className="text-[14.500px] leading-[21px]">Warstwy</h2>
        <span className="pb-[5px]"><DockButtons /></span>
      </div>
      <div className="flex h-[28px] items-center pb-[2px] pl-[2px]"><MiniBar items="brush group eye filter epsilon v expand collapse removeLayer" /></div>
      <ul className="h-[319px] border border-l-0 border-[#b4b4b4] bg-white">
        {LAYERS.map((l) => (
          <li key={l.n} className={`flex h-[22px] items-center pr-[8px] pl-[28px] ${l.cur ? "bg-[#efefef]" : ""}`}>
            <span className="flex size-[17px] items-center justify-center border border-[#bcbcbc] bg-white">{l.on && <Check />}</span>
            <span className="ml-[6px] flex w-[26px]">
              <svg width="19" height="19" viewBox="0 0 19 19">
                {l.shape === "line" && <path d="M0 8.500h19" stroke={l.c} strokeWidth="2" />}
                {l.shape === "dot" && <circle cx="10" cy="9" r="5" fill={l.c} stroke="#333" />}
                {l.shape === "box" && <rect x=".5" y=".5" width="18" height="18" fill={l.c} stroke="#4b4b3a" />}
              </svg>
            </span>
            <span className={`flex-1 pt-px text-[14.500px] leading-[21px] font-bold ${l.on ? "tracking-[-0.450px]" : "text-[#7f7f7f] italic"} ${l.cur ? "underline underline-offset-2" : ""}`}>{l.n}</span>
            {l.side && <SideIcon k={l.side} cur={l.cur} />}
          </li>
        ))}
      </ul>
    </section>
  );
}

/* ---------- map ---------- */

type Sheet = { ox: number; oy: number; sx: number; sy: number };
const NORTH: Sheet = { ox: 300, oy: 160, sx: 1.96, sy: 3 };
const SOUTH: Sheet = { ox: 300, oy: 480, sx: 2.063, sy: 3 };
const EAST: Sheet = { ox: 1060, oy: 155, sx: 1.83, sy: 3 };
const CORNER: Sheet = { ox: 1050, oy: 790, sx: 3, sy: 3 };

function project(sh: Sheet, raw: string): Pt[] {
  return raw.split(" ").map((p) => {
    const [x, y] = p.split(",").map(Number);
    return [sh.ox + x / sh.sx, sh.oy + y / sh.sy] as Pt;
  });
}

// Adds deterministic meanders between the surveyed vertices.
function meander(pts: Pt[], amp: number, seed: number): string {
  let s = (seed * 2654435 + 97) >>> 0;
  const rnd = () => {
    s = (s + 0x6d2b79f5) >>> 0;
    let t = Math.imul(s ^ (s >>> 15), 1 | s);
    t = (t + Math.imul(t ^ (t >>> 7), 61 | t)) ^ t;
    return ((t ^ (t >>> 14)) >>> 0) / 4294967296 - 0.5;
  };
  let d = `M${pts[0][0].toFixed(1)} ${pts[0][1].toFixed(1)}`;
  for (let i = 1; i < pts.length; i++) {
    const [ax, ay] = pts[i - 1];
    const [bx, by] = pts[i];
    const n = Math.max(1, Math.round(Math.hypot(bx - ax, by - ay) / 3.5));
    for (let k = 1; k <= n; k++) {
      const t = k / n;
      d += `L${(ax + (bx - ax) * t + rnd() * amp).toFixed(1)} ${(ay + (by - ay) * t + rnd() * amp).toFixed(1)}`;
    }
  }
  return d;
}

type Line = { sh: Sheet; p: string; w: number; amp: number; n?: number };
const RIVERS: Line[] = [
  { sh: NORTH, n: 4, w: 1.300, amp: 6, p: "0,512 15,508 30,516 45,512 60,500 75,495 90,475 105,455 125,442 140,438 155,420" },
  { sh: NORTH, w: 1.200, amp: 1.500, p: "20,520 40,522 60,508 70,528 68,510 85,490" },
  { sh: NORTH, n: 4, w: 1.500, amp: 3.200, p: "155,420 175,403 190,405 210,420 222,400 235,380 255,376 285,371 295,395 315,402 330,415 345,392 365,385 400,385 415,400 435,415 445,435 445,465 460,460 458,448 450,455 463,490 475,525 490,540 505,525 520,500 545,478 570,475 590,477 608,467 630,487 640,515 650,532 662,538 670,555 685,562 702,575 712,555 715,522 735,518 745,495 755,510 775,492 792,486 808,500 808,545 815,580 818,630 824,660 838,670" },
  { sh: NORTH, w: 2.400, amp: 1, p: "222,400 235,380 255,376 285,371 295,395 315,402" },
  { sh: NORTH, w: 2.400, amp: 1, p: "490,540 505,525 520,500 545,478 570,475 590,477 608,467 630,487" },
  { sh: NORTH, w: 1.200, amp: 1, p: "170,403 180,418 210,425 225,405" },
  { sh: NORTH, w: 1.200, amp: 1, p: "235,380 243,400 250,378" },
  { sh: NORTH, n: 2, w: 1.200, amp: 2.500, p: "330,390 345,380 375,378 410,388 420,418 440,425" },
  { sh: NORTH, w: 3.300, amp: 0.500, p: "400,378 406,369 415,363 427,360 435,363 445,372 455,375 465,371 470,365 472,352 475,340 480,331 487,328 500,328 508,327 514,313 518,295 521,286 528,283 535,270 545,258 550,240 562,235 575,233 577,215 580,203 590,198 600,196 615,194 628,200 638,200 645,192 650,182 653,165 648,150 647,135 648,115 652,102 660,96 667,97 676,108 682,120 690,122 694,110 692,95 693,78 698,68 695,55 685,50 670,46 655,50 653,40 658,30 668,22 676,10" },
  { sh: NORTH, w: 2.400, amp: 1, p: "0,68 8,52 18,42 22,28 32,12 30,30 40,38 42,22 47,12" },
  { sh: NORTH, n: 2, w: 1.300, amp: 3, p: "838,665 850,658 862,652 875,655 888,645 888,622 905,612 930,602 945,590 960,565 975,550 985,525 1000,515 1040,525 1065,540 1085,560" },
  { sh: NORTH, n: 3, w: 1.200, amp: 3.500, p: "1055,530 1085,560 1100,590 1115,620 1128,640" },
  { sh: NORTH, n: 3, w: 1.500, amp: 3.200, p: "1115,620 1128,640 1133,665 1133,695 1145,715 1158,740 1180,750 1195,772 1215,762 1235,755 1255,770 1272,768 1295,782 1318,802" },
  { sh: NORTH, w: 1.400, amp: 1, p: "1318,802 1340,785 1360,800 1385,828" },
  { sh: NORTH, n: 3, w: 1.500, amp: 3, p: "1350,795 1360,820 1385,830 1415,835 1435,825 1455,845 1472,852 1472,895 1480,917" },
  { sh: NORTH, w: 1.300, amp: 0.800, p: "985,525 978,548 1010,545 1050,548 1080,570 1105,600 1118,625" },
  { sh: NORTH, w: 1.300, amp: 0.800, p: "1040,522 1090,545 1110,550 1118,600 1125,635" },
  { sh: EAST, w: 1.500, amp: 0, p: "30,27 52,27" },
  { sh: EAST, n: 3, w: 2, amp: 2.400, p: "62,25 72,60 85,90 105,115 130,115 150,108 170,105 190,122 210,105 212,85 218,68 235,92 255,100 280,80 305,105 325,138 350,145 358,178 395,178 405,205 408,255" },
  { sh: EAST, w: 2.600, amp: 0.800, p: "405,205 408,255 418,258 424,245 432,240 438,270 450,280 443,300 440,325 460,330 463,347" },
  { sh: SOUTH, w: 1.500, amp: 1.800, p: "347,46 335,62 325,70 318,85 305,90 295,112 283,120 270,135 245,150 242,170 235,190 210,197 197,215 195,245 185,275 170,315 150,345 138,375 120,395 108,430" },
  { sh: SOUTH, w: 1.200, amp: 3, p: "190,270 170,315 150,345" },
  { sh: SOUTH, n: 2, w: 1.400, amp: 4, p: "108,425 98,455 75,480 55,488 30,500 10,512 3,520 8,535 3,548" },
  { sh: SOUTH, w: 1.500, amp: 3, p: "3,548 20,550 40,568 62,562" },
  { sh: SOUTH, w: 1.600, amp: 1, p: "62,562 80,590 98,615 108,645 112,675 125,697 140,720 150,750 170,775 180,810 190,850 198,890 212,930 215,955 208,975 208,1000 218,1010 223,1045 223,1115 230,1133 258,1138" },
  { sh: SOUTH, w: 1.400, amp: 0.400, p: "258,1138 260,1180 260,1240 257,1265 262,1290 258,1317 245,1327 238,1337" },
  { sh: SOUTH, w: 1.400, amp: 2.500, p: "70,575 98,615 112,675 140,720 150,750 170,775 180,810 190,850 198,890 212,930 215,955 206,975 208,1000 220,1015" },
  { sh: SOUTH, w: 1.400, amp: 0.800, p: "1203,258 1200,290 1190,315 1175,345 1163,380 1163,470 1192,485 1222,512 1235,540 1237,582 1227,585 1226,640 1215,672 1197,677 1195,662 1180,648 1155,652 1150,627 1110,615 1085,610 1060,600 1045,596 1010,603 987,610 976,642" },
  { sh: SOUTH, n: 2, w: 1.300, amp: 1.600, p: "1200,285 1185,320 1172,360 1163,385" },
  { sh: SOUTH, w: 1.200, amp: 0.600, p: "1163,470 1170,485 1183,497 1193,487" },
  { sh: SOUTH, w: 1.400, amp: 0, p: "976,642 937,642" },
  { sh: SOUTH, w: 1.400, amp: 0.800, p: "937,642 930,620 920,617 910,628 890,628 862,618 838,626 830,643 817,660" },
  { sh: SOUTH, w: 1.600, amp: 0.800, p: "812,670 794,695 775,718 764,745 755,775 755,850 751,880 755,930" },
  { sh: SOUTH, w: 1.500, amp: 2.500, p: "757,930 753,980 765,1015 763,1075 770,1100 762,1140 745,1180 748,1215 730,1250 712,1260 715,1295 700,1315 708,1355 695,1390 688,1440" },
  { sh: SOUTH, w: 1.500, amp: 2.500, p: "757,930 765,1000 768,1090 768,1150 755,1210 735,1235 728,1285 705,1310 702,1335 716,1380 708,1410 700,1440" },
  { sh: SOUTH, w: 1.400, amp: 2.500, p: "766,1010 760,1060 770,1110 752,1165 758,1200 740,1225" },
  { sh: SOUTH, w: 1.500, amp: 1.500, p: "1562,795 1549,835 1552,880 1549,915 1562,940" },
  { sh: CORNER, w: 1.800, amp: 0.500, p: "288,255 290,290 283,303 270,315 250,335" },
  { sh: CORNER, n: 3, w: 1.700, amp: 2.400, p: "250,335 222,347 208,370 202,390 208,415 196,440 195,458 210,463 225,485 236,500 232,530 250,545 270,573 285,590 300,600" },
];

const RAILS: Line[] = [
  { sh: NORTH, w: 1.500, amp: 0.500, p: "824,660 826,640 840,610 858,575 865,555 885,548 905,540 925,515 940,490 957,460 970,457 985,460 992,480 1003,488 1027,487 1031,498 1028,513 1003,513" },
  { sh: NORTH, w: 1.500, amp: 0.500, p: "1028,503 1040,503 1052,510 1060,520 1075,527 1085,542 1105,545 1115,557 1121,574" },
  { sh: NORTH, w: 1.500, amp: 0.400, p: "826,677 826,700 832,735 822,790 829,800 821,825 810,850 823,905 837,945 837,970 842,990" },
  { sh: SOUTH, w: 1.500, amp: 0.400, p: "924,72 908,75" },
  { sh: SOUTH, w: 1.500, amp: 0.500, p: "880,0 885,25 898,52 908,75 908,92 917,120 920,140 930,170 938,190 933,215 940,243 937,280 930,290 926,312 910,332 895,350 885,370 877,403 850,445 835,485 825,515 822,545 818,572 832,590 823,620 820,645 817,660 798,690 780,715 768,745 758,775 758,810 754,850 756,890 759,930 765,975 768,1015 778,1075 776,1140 780,1185 790,1220 802,1240 820,1257 835,1273 885,1277 918,1288 935,1288 937,1279" },
  { sh: SOUTH, w: 1.500, amp: 0.500, p: "925,1290 925,1312 918,1332 903,1340 885,1357 877,1380 866,1410 857,1433 845,1440 835,1460 826,1467" },
  { sh: SOUTH, w: 1.500, amp: 0.400, p: "816,1496 823,1508 824,1530" },
];

const CROSSINGS: Pt[] = [[721, 381], [810.5, 332.500], [696, 699], [686, 711], [687, 710], [668, 789.500], [668, 791]];

function Lines({ set, color }: { set: Line[]; color: string }) {
  return (
    <g stroke={color} fill="none" strokeLinejoin="round">
      {set.flatMap((l, i) =>
        Array.from({ length: l.n ?? 1 }, (_, k) => (
          <path key={`${i}-${k}`} strokeWidth={l.w} d={meander(project(l.sh, l.p), l.amp, i + k * 31 + 1)} />
        ))
      )}
    </g>
  );
}

const MapCanvas = () => (
  <div className="h-[827px] w-[1141px] shrink-0 overflow-hidden border border-[#b4b4b4] bg-white">
    <svg width="1139" height="825" viewBox="301 164 1139 825" className="block">
      <Lines set={RIVERS} color="#d6b53c" />
      <Lines set={RAILS} color="#141414" />
      {CROSSINGS.map(([x, y], i) => <circle key={i} cx={x} cy={y} r="4.700" fill="#7fb069" stroke="#2c4a30" strokeWidth="1.200" />)}
    </svg>
  </div>
);

/* ---------- identify dock ---------- */

const combo = "flex items-center justify-between rounded-[3px] border border-[#a6a6a6] bg-linear-to-b from-white to-[#efefef]";

const Identify = () => (
  <section className="flex min-w-0 flex-1 flex-col pl-[7px]">
    <div className="flex h-[22px] items-end justify-between pl-1">
      <h2 className="text-[14.500px] leading-[21px] tracking-[-0.15px]">Wynik identyfikacji</h2>
      <span className="pb-[5px]"><DockButtons /></span>
    </div>
    <div className="flex h-[29px] items-center pb-[3px] pl-[3px]"><MiniBar items="-form / expand collapse expandNew / deselect / -copy -printer / identSel v spanner" /></div>
    <div className="h-[706px] border border-r-0 border-[#b4b4b4] bg-white">
      <div className="flex h-6 border-b border-[#b4b4b4] bg-linear-to-b from-white to-[#efefef] text-[14px] leading-[25px]">
        <span className="w-[125px] border-r border-[#c6c6c6] pl-[2px]">Obiekt</span>
        <span className="pl-[2px]">Wartość</span>
      </div>
    </div>
    <div className="mt-[5px] flex items-center text-[12.500px]">
      <span className="w-[37px] pt-[2px] pl-1">Tryb</span>
      <span className={`${combo} h-7 w-[428px] pr-[9px] pl-1`}><span className="pt-[2px]">bieżąca warstwa</span><Tri /></span>
    </div>
    <div className="mt-[7px] flex items-center text-[12.500px] text-[#7d7d7d]">
      <span className="w-[46px] pt-[2px] pl-1">Widok</span>
      <span className={`${combo} h-6 w-[75px] border-[#c4c4c4] pr-[10px] pl-1`}><span className="pt-[2px]">Drzewo</span><Tri dim /></span>
      <span className="ml-[291px] flex h-[23px] w-[54px] items-center justify-center rounded-[3px] border border-[#a6a6a6] bg-linear-to-b from-white to-[#f3f3f3] pt-[2px] text-black">Pomoc</span>
    </div>
  </section>
);

/* ---------- status bar ---------- */

const field = "flex h-7 shrink-0 rounded-t-[3px] border border-[#a6a6a6] bg-white leading-[25px]";

const Spin = () => (
  <span className="ml-auto flex w-[17px] flex-col items-center gap-[3px] border-l border-[#b4b4b4] bg-[#f6f6f6] pt-[4px]">
    <span className="rotate-180"><Tri s={9} /></span><Tri s={9} />
  </span>
);

const StatusBar = () => (
  <footer className="flex h-[28px] shrink-0 pt-[4px] text-[12.500px] leading-[27px] whitespace-nowrap">
    <div className={`${field} ml-[3px] w-[232px] items-center gap-[7px] pl-[8px] text-[12.500px] tracking-[-0.100px] text-[#777]`}>
      <svg width="14" height="14" viewBox="0 0 14 14" fill="none" stroke="#777" strokeWidth="1.200"><circle cx="5.500" cy="5.500" r="4.300" /><path d="M8.700 8.700l4.500 4.500" /></svg>
      Szukana fraza (Ctrl+K)
    </div>
    <span className="ml-[746px] w-[78px] tracking-[0.050px]">Współrzędne</span>
    <span className={`${field} w-[115px] pl-[6px] tracking-[-0.180px]`}>-106923,4212813</span>
    <svg width="20" height="20" viewBox="0 0 20 20" className="mt-[1px] ml-[4px] shrink-0" fill="#111">
      <path d="M1 4l6-3 6 3 1 5-4 2-5-1zM9 10l6-2 4 3v6l-3 3h-5l-2-4z" />
      <path d="M3 3l3 6M7 2l3 7M11 10l2 8M15 9l1 6" stroke="#fff" strokeWidth="1.200" /><circle cx="16" cy="15" r="2.500" fill="#fff" stroke="#111" />
      <path d="M14 5l5-3M1 13l5-1M2 17l6-2" stroke="#111" />
    </svg>
    <span className="ml-[13px] w-[34px]">Skala</span>
    <span className={`${field} w-[93px] pr-[10px] pl-[1px]`}><span className="flex-1 tracking-[-0.250px]">879953280</span><span className="flex h-[24px] items-center"><Tri s={9} /></span></span>
    <svg width="16" height="20" viewBox="0 0 16 20" className="mt-[2px] ml-[12px] shrink-0"><path d="M3.500 9V6a4.500 4.500 0 019 0v3" fill="none" stroke="#8d8d8d" strokeWidth="2.200" /><rect y="9" width="16" height="12" rx="1.500" fill="#5a5a5a" /></svg>
    <span className="ml-[9px] w-[79px] tracking-[-0.200px]">Powiększenie</span>
    <span className={`${field} w-[93px] pl-[4px]`}>100%<Spin /></span>
    <span className="ml-[9px] w-[41px]">Obrót</span>
    <span className={`${field} w-[89px] pl-[4px]`}>0,0 °<Spin /></span>
    <span className="mt-[3px] ml-[6px] flex size-[17px] shrink-0 items-center justify-center border border-[#aaa] bg-white"><Check /></span>
    <span className="ml-[5px] w-[70px]">Renderuj</span>
    <svg width="20" height="20" viewBox="0 0 20 20" className="mt-[2px] shrink-0" fill="none" stroke="#eee"><path d="M6 1h8l6 7-10 12L0 8z" fill="#666" stroke="none" /><path d="M0 8.500h20M2 5h16M3 12h14M7 1L5 8l5 12M13 1l2 7-5 12M10 1v19" strokeWidth=".9" /></svg>
    <span className="ml-[4px] w-[84px] tracking-[-0.100px]">EPSG:4326</span>
    <svg width="20" height="18" viewBox="0 0 20 18" className="mt-[3px] shrink-0"><ellipse cx="10" cy="7.500" rx="10" ry="7.500" fill="#5c5c5c" /><path d="M9 13h5l-2 5z" fill="#5c5c5c" /><g fill="#fff"><circle cx="5.500" cy="7.500" r="1.400" /><circle cx="10" cy="7.500" r="1.400" /><circle cx="14.500" cy="7.500" r="1.400" /></g></svg>
  </footer>
);

/* ---------- attribute table window ---------- */

const FIELDS: [string, string | null, string][] = [
  ["gid", null, "mt-[23px]"], ["cat", "2", "mt-[11px]"], ["exsdesc", "Operational", "mt-[13px]"], ["f_code", "AN010", "mt-[13px]"], ["f_codedesc", "Railroad", "mt-[13px]"],
  ["fcodesc", "Single", "mt-[13px]"], ["gid_2", null, "mt-[11px]"], ["cat_2", "3446", "mt-[11px]"], ["length", "14183,395", "mt-[13px]"], ["decription", "Susitna River", "mt-[13px]"],
];

const AttributeWindow = () => (
  <div className="absolute top-[270px] left-[1055px] flex h-[609px] w-[870px] flex-col border border-[#6f6f6f] bg-[#efefef] shadow-[0_4px_18px_2px_rgba(0,0,0,0.32)]">
    <header className="flex h-[37px] shrink-0 items-center bg-white pl-[9px]">
      <QLogo s={20} />
      <h1 className="ml-[9px] text-[14.500px] tracking-[-0.190px] whitespace-nowrap">Przecięcia — Wszystkie obiekty: 8, Odfiltrowane: 8, Wybrane: 0</h1>
    </header>
    <div className="flex h-[31px] shrink-0 items-center pb-px pl-[3px]">
      <MiniBar items="pencil -multiEdit -saveEdits refresh / -tableDrop -trash -cut -copy -paste / selExpr selAll invert desel filter moveTop panSel zoomSel / -newField -delField tableEdit abacus / conditional / dock actions" />
    </div>
    <div className="flex">
      <div className="flex w-[256px] flex-col">
        <div className="flex h-[29px] items-center pl-[7px]">
          <Icon n="epsilonFind" s={19} />
          <span className="ml-[3px] flex-1 pt-[3px] text-[12.500px] tracking-[-0.200px]">Wyrażenie</span>
          <span className="mt-[13px] mr-[2px]"><Tri s={9} /></span>
        </div>
        <ul className="h-[448px] border border-[#b4b4b4] bg-white">
          {Array.from({ length: 8 }, (_, i) => (
            <li key={i} className={`flex h-6 items-start pl-[4px] ${i === 0 ? "bg-[#efefef]" : ""}`}>
              <span className="mt-[4px] size-[13px] border border-[#8e8e8e] bg-[#e9e9e9]" />
              <span className="ml-[10px] text-[14.500px] leading-[25px] tracking-[-0.150px]">Operational</span>
            </li>
          ))}
        </ul>
        <div className="flex h-8 items-center pl-px">
          <span className="flex w-[25px] justify-center"><Icon n="first" s={19} /></span>
          <span className="flex w-[25px] justify-center"><Icon n="prev" s={19} /></span>
          <span className="flex w-[25px] justify-center"><Icon n="next" s={19} /></span>
          <span className="flex w-[24px] justify-center"><Icon n="last" s={19} /></span>
          <span className="w-[52px] pt-[2px] text-[17px] leading-6 tracking-[0.700px]">1 / 8</span>
          <span className="flex w-[24px] justify-center"><Icon n="bulb" s={20} /></span>
          <span className="ml-[27px] flex w-[20px] justify-center"><Icon n="move" s={19} /></span>
          <span className="ml-[9px] flex"><Icon n="zoom" s={21} /></span>
        </div>
        <div className="ml-[3px] flex h-[27px] w-[175px] items-center rounded-[3px] border border-[#adadad] bg-linear-to-b from-white to-[#f1f1f1] pl-[5px]">
          <Icon n="filter" s={19} />
          <span className="ml-[4px] pt-[2px] text-[12.500px] tracking-[-0.190px] whitespace-nowrap">Pokaż wszystkie obiekty</span>
          <span className="mt-[13px]"><Tri s={8} /></span>
        </div>
      </div>
      <div className="ml-[5px] h-[506px] flex-1 border-2 border-[#b0b0b0] text-[12.500px]">
        {FIELDS.map(([label, value, mt]) => (
          <div key={label} className={`flex items-center ${mt}`}>
            <span className={`ml-[22px] w-[71px] shrink-0 tracking-[-0.200px] ${value === null ? "pt-[2px] leading-[18px]" : "pt-[2px] leading-4"}`}>{label}</span>
            {value === null ? (
              <span className="h-[23px] flex-1 rounded-l-[3px] border border-r-0 border-[#a3a3a3]" />
            ) : (
              <span className="h-[18px] flex-1 bg-[#fbfbfb] pt-[2px] pl-[2px] leading-4 tracking-[-0.100px]">{value}</span>
            )}
          </div>
        ))}
      </div>
    </div>
  </div>
);

/* ---------- window ---------- */

export default function App() {
  return (
    <div className="relative flex h-[1013px] w-[1917px] flex-col overflow-hidden bg-[#efefef] font-['Noto_Sans','Open_Sans',sans-serif] text-black">
      <header className="flex h-[21px] shrink-0 items-start bg-white">
        <span className="-mt-[5px] ml-px flex"><QLogo s={20} /></span>
        <span className="ml-[5px] text-[14.500px] leading-[14px] tracking-[-0.200px] text-[#8d8d8d]">*Projekt bez nazwy — QGIS</span>
        <svg width="160" height="21" viewBox="0 0 160 21" fill="none" stroke="#888" className="ml-auto">
          <path d="M7 5.500h12M124.500 0l12 12M136.500 0l-12 12M65.500 2.500h9v9h-9zM68 2.500V0h9.500v9h-3" />
        </svg>
      </header>
      <nav className="flex h-[24px] shrink-0 border-b border-[#d5d5d5] bg-[#efefef] pl-[10px] text-[14.500px] leading-[25px] tracking-[-0.200px] whitespace-nowrap text-[#8f8f8f]">
        {MENU.map(([a, u, b, w]) => (
          <span key={a + u + b} className={w}>{a}<span className="underline underline-offset-2">{u}</span>{b}</span>
        ))}
      </nav>
      <Bar h="h-[40px]" items="| +file open save layout wrench style | *hand panSel zoomIn zoomOut zoomFull zoomSel zoomLayer -zoomOne zoomLast -zoomNext newMap map3d bookmark bookmarks clock refresh | identify table abacus gear sigma ruler v *tip -action -v textNote v" />
      <Bar h="h-[39px]" items="| dataSource geopackage shapefile spatialite memory / virtual / | -pencils pencil -saveEdits -points -vertex -v -multiEdit -trash -cut -copy -paste -undo -redo | abcYellow diagram / abcPin abcRed / -gPin -gEye -gMove -gRotate -gEdit | metasearch | python | help | reload" />
      <Bar h="h-[38px]" items="| select v selectForm v deselect v selectLoc" />
      <main className="flex h-[828px] shrink-0 pt-px">
        <div className="-mt-px flex w-[293px] shrink-0 flex-col">
          <Browser />
          <Layers />
        </div>
        <div className="flex w-[7px] shrink-0 items-center justify-center">
          <i className="h-4 w-px -translate-y-[1px] bg-[repeating-linear-gradient(#b0b0b0_0_1px,transparent_1px_3px)]" />
        </div>
        <MapCanvas />
        <div className="-mt-px flex min-w-0 flex-1"><Identify /></div>
      </main>
      <StatusBar />
      <AttributeWindow />
    </div>
  );
}
